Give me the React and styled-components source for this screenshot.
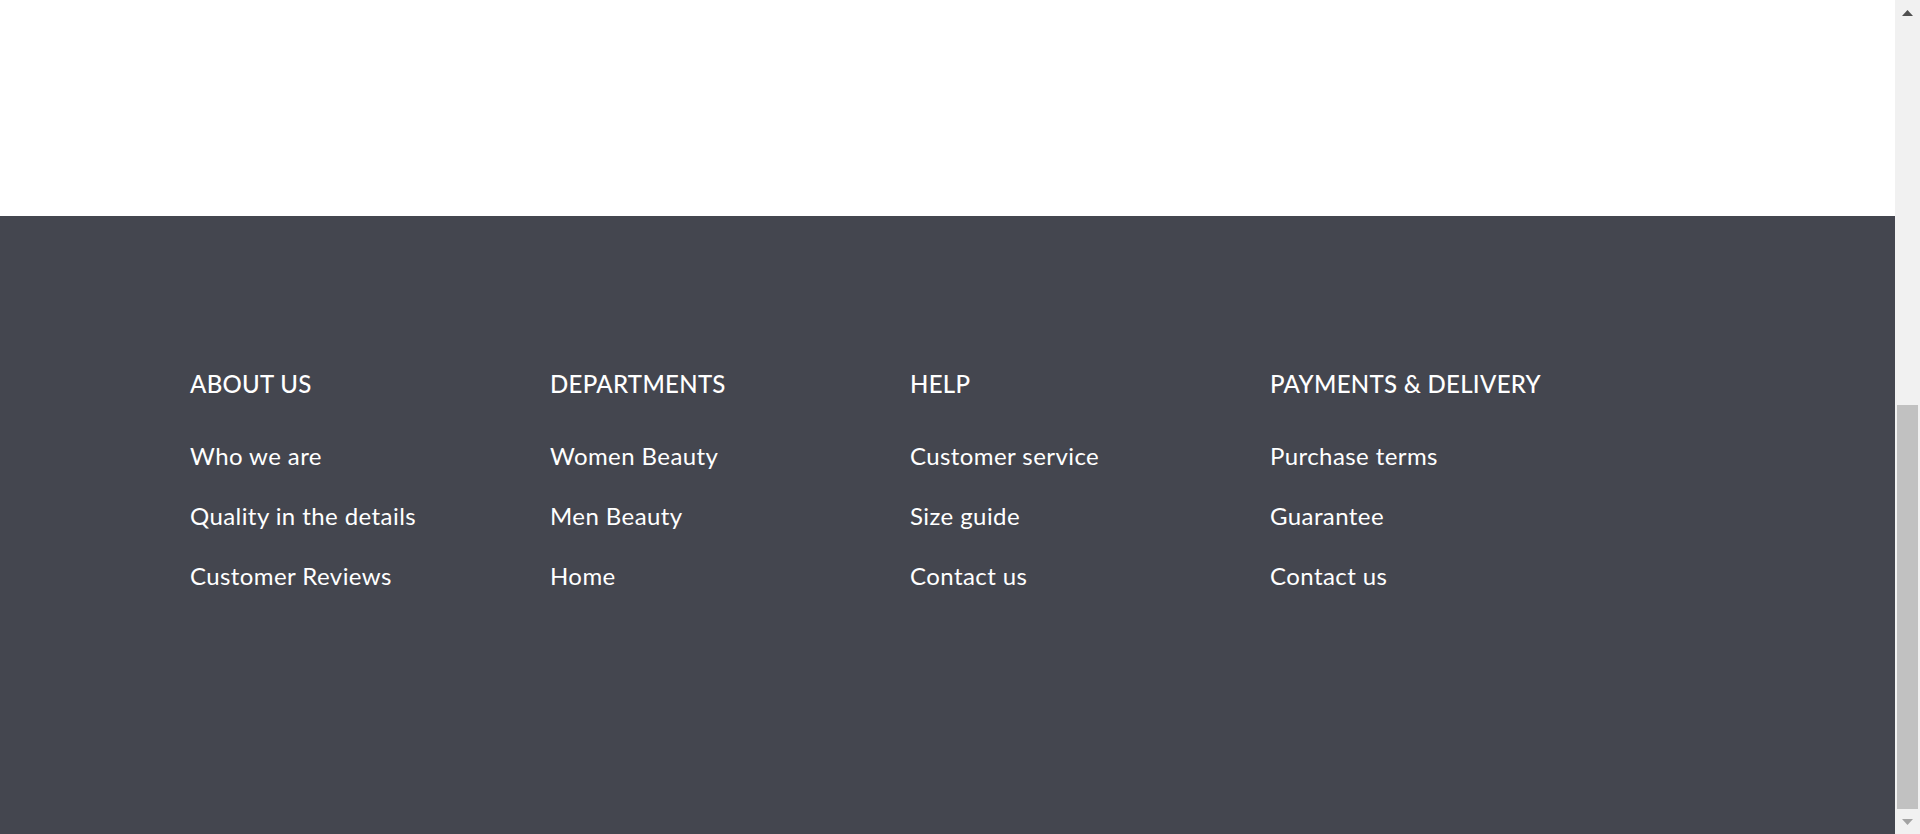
import React from "react";
import styled, { createGlobalStyle } from "styled-components";

const Global = createGlobalStyle`
  html, body { margin: 0; padding: 0; height: 100%; overflow: hidden; }
  body { font-family: "Lato", "Open Sans", sans-serif; background: #fff; }
`;

const Viewport = styled.div`
  display: flex;
  height: 100vh;
  width: 100vw;
`;

const Main = styled.div`
  flex: 1;
  display: flex;
  flex-direction: column;
  min-width: 0;
`;

const WhiteArea = styled.div`
  height: 216px;
  flex: none;
  background: #fff;
`;

const Footer = styled.footer`
  flex: 1;
  background: #44464f;
  padding: 153px 0 0 190px;
  box-sizing: border-box;
`;

const Columns = styled.div`
  display: grid;
  grid-template-columns: repeat(4, 360px);
`;

const Column = styled.div`
  display: flex;
  flex-direction: column;
`;

const Heading = styled.h3`
  margin: 0 0 42px;
  font-size: 24px;
  line-height: 30px;
  font-weight: 500;
  letter-spacing: 0.3px;
  color: #fff;
  white-space: nowrap;
`;

const LinkList = styled.ul`
  list-style: none;
  margin: 0;
  padding: 0;
  display: flex;
  flex-direction: column;
  gap: 30px;
`;

const FooterLink = styled.a`
  display: block;
  font-size: 24px;
  line-height: 30px;
  letter-spacing: 0.42px;
  color: #fff;
  text-decoration: none;
  white-space: nowrap;
`;

const ScrollTrack = styled.div`
  flex: none;
  width: 25px;
  height: 100%;
  background: #f1f1f1;
  display: flex;
  flex-direction: column;
  align-items: center;
`;

const ScrollButton = styled.div`
  flex: none;
  width: 25px;
  height: 25px;
  display: flex;
  align-items: center;
  justify-content: center;
`;

const Thumb = styled.div`
  margin-top: auto;
  width: 21px;
  height: 404px;
  background: #c1c1c1;
`;

const Arrow = ({ up, color }) => (
  <svg width="11" height="6" viewBox="0 0 11 6">
    <polygon points={up ? "5.5,0 11,6 0,6" : "0,0 11,0 5.5,6"} fill={color} />
  </svg>
);

const columns = [
  { title: "ABOUT US", links: ["Who we are", "Quality in the details", "Customer Reviews"] },
  { title: "DEPARTMENTS", links: ["Women Beauty", "Men Beauty", "Home"] },
  { title: "HELP", links: ["Customer service", "Size guide", "Contact us"] },
  { title: "PAYMENTS & DELIVERY", links: ["Purchase terms", "Guarantee", "Contact us"] },
];

export default function App() {
  return (
    <>
      <Global />
      <Viewport>
        <Main>
          <WhiteArea />
          <Footer>
            <Columns>
              {columns.map((c) => (
                <Column key={c.title}>
                  <Heading>{c.title}</Heading>
                  <LinkList>
                    {c.links.map((l) => (
                      <li key={l}>
                        <FooterLink href="#">{l}</FooterLink>
                      </li>
                    ))}
                  </LinkList>
                </Column>
              ))}
            </Columns>
          </Footer>
        </Main>
        <ScrollTrack>
          <ScrollButton>
            <Arrow up color="#505050" />
          </ScrollButton>
          <Thumb />
          <ScrollButton>
            <Arrow color="#a3a3a3" />
          </ScrollButton>
        </ScrollTrack>
      </Viewport>
    </>
  );
}
